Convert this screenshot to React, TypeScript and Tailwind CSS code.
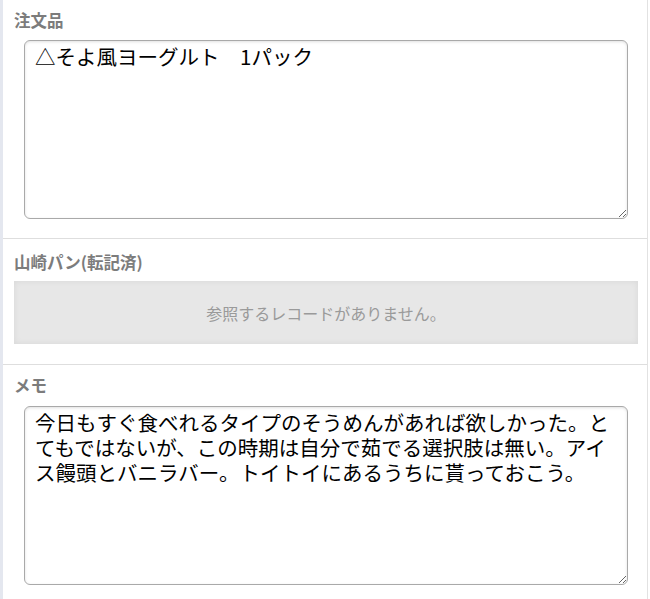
import React from "react";

const jp = { fontFamily: '"Noto Sans CJK JP", "Noto Sans", sans-serif' };

function Label(props: { text: string }) {
  return (
    <div className="h-5 text-[16.5px] leading-5 font-bold text-[#7c7c7c]" style={jp}>
      {props.text}
    </div>
  );
}

function Area(props: { value: string }) {
  return (
    <textarea
      readOnly
      defaultValue={props.value}
      className="block ml-[10px] w-[604px] h-[179px] rounded-md border border-[#a9a9a9] bg-white px-[10px] pt-[3px] text-[20.5px] leading-[25px] text-black shadow-[inset_0_1px_3px_rgba(0,0,0,0.12)] outline-none"
      style={jp}
    />
  );
}

export default function App() {
  return (
    <div className="flex h-[599px] w-[650px] bg-white">
      <div className="w-[3px] shrink-0 bg-[#e4e7ef]" />
      <div className="w-[645px] border-r border-[#e2e2e2]">
        <div className="pl-[11px] pr-[9px] pt-[10px] pb-[19px] border-b border-[#dedede]">
          <Label text="注文品" />
          <div className="h-[10px]" />
          <Area value={"△そよ風ヨーグルト　1パック"} />
        </div>
        <div className="pl-[11px] pr-[9px] pt-[13px] pb-[20px] border-b border-[#dedede]">
          <Label text="山崎パン(転記済)" />
          <div className="h-[9px]" />
          <div
            className="flex h-[63px] w-[624px] items-center justify-center bg-[#e7e7e7] shadow-[inset_0_0_6px_rgba(0,0,0,0.07)] text-[16px] text-[#9a9a9a]"
            style={jp}
          >
            参照するレコードがありません。
          </div>
        </div>
        <div className="pl-[11px] pr-[9px] pt-[10px]">
          <Label text="メモ" />
          <div className="h-[11px]" />
          <Area
            value={
              "今日もすぐ食べれるタイプのそうめんがあれば欲しかった。とてもではないが、この時期は自分で茹でる選択肢は無い。アイス饅頭とバニラバー。トイトイにあるうちに貰っておこう。"
            }
          />
        </div>
      </div>
    </div>
  );
}
